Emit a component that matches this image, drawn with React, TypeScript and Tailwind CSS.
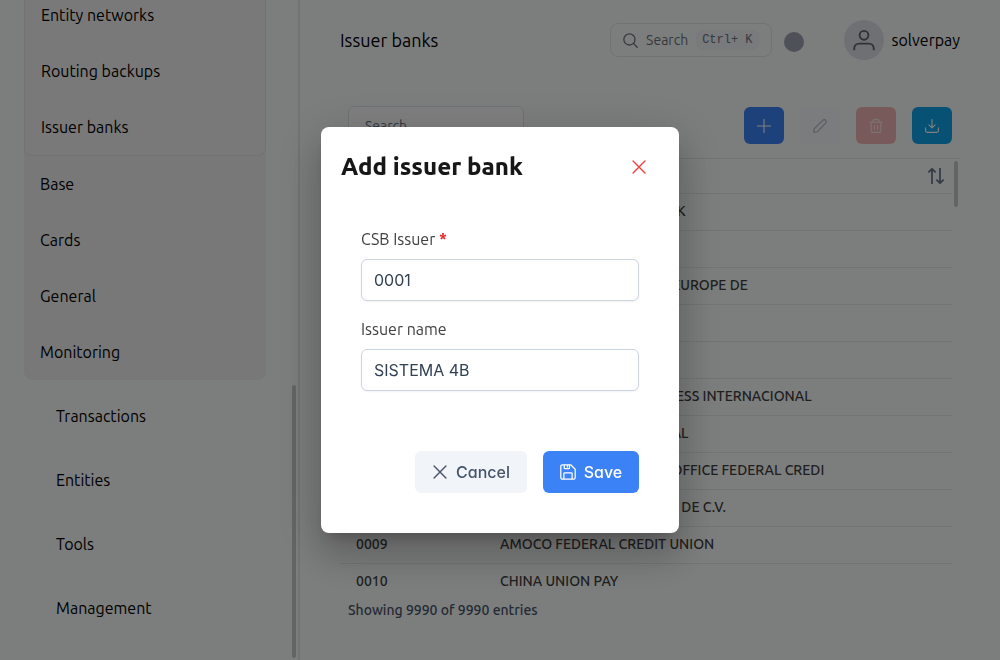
import type { ReactNode } from "react";

const openGroup = ["Entity networks", "Routing backups", "Issuer banks"];
const closedGroups = ["Base", "Cards", "General", "Monitoring"];
const sections = ["Transactions", "Entities", "Tools", "Management"];

const banks = [
  ["0000", "BANCO DE COMERCIO BANK"],
  ["0001", "SISTEMA 4B"],
  ["0002", "ALIBANK INTERNATIONAL EUROPE DE"],
  ["0003", "SERVIRED"],
  ["0004", "EURO 6000"],
  ["0005", "AMERICAN EXPRESS BUSINESS INTERNACIONAL"],
  ["0006", "MERCADOS INTERNACIONAL"],
  ["0007", "AMERICAN SAILORS POST OFFICE FEDERAL CREDI"],
  ["0008", "ROSA SOCIEDAD ANONIMA DE C.V."],
  ["0009", "AMOCO FEDERAL CREDIT UNION"],
  ["0010", "CHINA UNION PAY"],
];

function Icon({ children, className = "size-4", width = 1.1 }: { children: ReactNode; className?: string; width?: number }) {
  return (
    <svg
      viewBox="0 0 14 14"
      className={className}
      fill="none"
      stroke="currentColor"
      strokeWidth={width}
      strokeLinecap="round"
      strokeLinejoin="round"
      aria-hidden="true"
    >
      {children}
    </svg>
  );
}

const Times = () => (
  <Icon width={1.25}>
    <path d="M1.8 1.8 12.2 12.2M12.2 1.8 1.8 12.2" />
  </Icon>
);

function Sidebar() {
  return (
    <nav className="relative flex w-[300px] shrink-0 flex-col justify-end overflow-hidden border-r-2 border-[#e4e6e5] pr-8 pb-5 pl-6 text-base text-black">
      <div className="shrink-0 rounded-lg bg-[#f1f0f0]">
        <ul className="rounded-lg border border-t-0 border-[#e4e4e4] bg-[#f3f3f3]">
          {openGroup.map((t) => (
            <li key={t}>
              <a href="#" className="flex h-14 items-center px-4">{t}</a>
            </li>
          ))}
        </ul>
        <ul>
          {closedGroups.map((t) => (
            <li key={t}>
              <a href="#" className="flex h-14 items-center px-4">{t}</a>
            </li>
          ))}
        </ul>
      </div>
      <ul className="shrink-0 pt-1">
        {sections.map((t) => (
          <li key={t}>
            <a href="#" className="flex h-16 items-center px-8">{t}</a>
          </li>
        ))}
      </ul>
      <div className="absolute right-0.5 bottom-0.5 h-[273px] w-1 rounded-full bg-[#c8c9c8]" />
    </nav>
  );
}

function Header() {
  return (
    <header className="flex h-20 items-center px-10 text-black">
      <h1 className="text-lg">Issuer banks</h1>
      <button className="ml-auto flex h-[34px] items-center rounded-lg border border-[#e2e5e4] px-3 text-sm text-[#6b7280]">
        <Icon className="size-[15px]" width={1.2}>
          <circle cx="6" cy="6" r="5.2" />
          <path d="m9.8 9.8 3.5 3.5" />
        </Icon>
        <span className="ml-2">Search</span>
        <kbd className="ml-2 flex h-5 items-center rounded-md bg-[#f3f4f6] px-1.5 font-['Liberation_Mono',monospace] text-xs">Ctrl+ K</kbd>
      </button>
      <button aria-label="Theme" className="ml-3 mt-1 size-5 rounded-full bg-[#9ca3af]" />
      <button className="ml-10 flex items-center gap-2">
        <span className="flex size-10 items-center justify-center rounded-full bg-[#dfe1e6] text-[#5b6472]">
          <Icon className="size-[22px]" width={1.2}>
            <circle cx="7" cy="4" r="2.8" />
            <path d="M.8 13v-.6c0-1.9 1.4-3.1 3.2-3.1h6c1.8 0 3.2 1.2 3.2 3.1v.6" />
          </Icon>
        </span>
        solverpay
      </button>
    </header>
  );
}

function Toolbar() {
  return (
    <div className="flex items-center gap-4 px-2 pb-[13px]">
      <input
        aria-label="Search"
        placeholder="Search"
        className="mr-auto h-[39px] w-44 rounded-md border border-[#dde2ea] bg-white px-4 text-sm outline-none placeholder:text-[#64748b]"
      />
      <button aria-label="Add" className="flex h-[37px] w-10 items-center justify-center rounded-md bg-[#3b82f6] text-white">
        <Icon className="size-3.5"><path d="M7 .5v13M.5 7h13" /></Icon>
      </button>
      <button aria-label="Edit" className="flex h-[37px] w-10 items-center justify-center rounded-md bg-[#f6f8fa] text-[#b0b5be]">
        <Icon className="size-3.5">
          <path d="M.7 13.3 1.1 9.8 9.7 1.3a1.9 1.9 0 0 1 2.9 0 1.9 1.9 0 0 1 0 2.9L4.2 12.8Z" />
        </Icon>
      </button>
      <button aria-label="Delete" className="flex h-[37px] w-10 items-center justify-center rounded-md bg-[#f3b5b5] text-[#fbe4e4]">
        <Icon className="size-3.5">
          <path d="M.6 3.3h12.8M2.2 3.3v8.6c0 .8.6 1.5 1.4 1.5h6.8c.8 0 1.4-.7 1.4-1.5V3.3M4 3.3V1.8C4 1.1 4.5.6 5.1.6h3.8c.6 0 1.1.5 1.1 1.2v1.5M5.4 6.4v4M8.6 6.4v4" />
        </Icon>
      </button>
      <button aria-label="Export" className="flex h-[37px] w-10 items-center justify-center rounded-md bg-[#0ea5e9] text-white">
        <Icon className="size-3.5">
          <path d="M7 .6v8.2M3.9 5.9 7 8.9l3.1-3M.6 8.8v3c0 .9.7 1.6 1.6 1.6h9.6c.9 0 1.6-.7 1.6-1.6v-3" />
        </Icon>
      </button>
    </div>
  );
}

function BankTable() {
  return (
    <div className="relative border-t border-[#e2e4ec] pr-2">
      <table className="w-full table-fixed border-collapse text-left text-sm text-[#3f3f3f]">
        <thead>
          <tr className="h-[34px] border-b border-[#e6e8e8]">
            <th className="w-36 px-4 font-semibold">CSB</th>
            <th className="pr-2 pl-4 font-semibold">
              <span className="flex items-center justify-between">
                Name
                <button aria-label="Sort by name" className="text-[#64748b]">
                  <Icon className="size-4" width={1.5}>
                    <path d="M3.5 13.5V.9M.8 3.4 3.5.7l2.7 2.7M10.5.5v12.6M7.8 10.6l2.7 2.7 2.7-2.7" />
                  </Icon>
                </button>
              </span>
            </th>
          </tr>
        </thead>
        <tbody className="font-medium">
          {banks.map(([code, name]) => (
            <tr key={code} className="h-[37px] border-b border-[#e6e8e8] last:border-b-0">
              <td className="px-4 pb-0.5">{code}</td>
              <td className="px-4 pb-0.5">{name}</td>
            </tr>
          ))}
        </tbody>
      </table>
      <div className="absolute top-0.5 right-0.5 h-[46px] w-1 rounded-full bg-[#c8c9c8]" />
    </div>
  );
}

function Field({ id, label, value, required = false }: { id: string; label: string; value: string; required?: boolean }) {
  return (
    <div>
      <label htmlFor={id} className="block h-8 text-base text-[#404040]">
        {label}
        {required && <span className="font-bold text-[#dc2626]"> *</span>}
      </label>
      <input
        id={id}
        defaultValue={value}
        className="h-[42px] w-full rounded-md border border-[#cbd5e1] bg-white px-3 font-[Inter,sans-serif] text-base text-[#334155] shadow-[0_1px_2px_0_rgba(18,18,23,0.05)] outline-none"
      />
    </div>
  );
}

function IssuerDialog() {
  return (
    <div className="fixed inset-0 flex items-center justify-center bg-black/50">
      <div
        role="dialog"
        aria-modal="true"
        aria-labelledby="dialog-title"
        className="w-[358px] rounded-lg bg-white shadow-[0_11px_15px_-7px_rgba(0,0,0,0.2),0_24px_38px_3px_rgba(0,0,0,0.14),0_9px_46px_8px_rgba(0,0,0,0.12)]"
      >
        <div className="flex items-center justify-between p-5">
          <h2 id="dialog-title" className="text-2xl font-extrabold text-[#171717]">Add issuer bank</h2>
          <button aria-label="Close" className="flex size-10 items-center justify-center text-[#ef4444]">
            <Times />
          </button>
        </div>
        <form className="px-10 pt-5 pb-10">
          <div className="flex flex-col gap-4">
            <Field id="csb" label="CSB Issuer" value="0001" required />
            <Field id="name" label="Issuer name" value="SISTEMA 4B" />
          </div>
          <div className="mt-[60px] flex justify-end gap-4 font-[Inter,sans-serif] text-base font-medium [font-feature-settings:'cv11']">
            <button type="button" className="flex h-[42px] min-w-28 items-center justify-center gap-2 rounded-md bg-[#f1f5f9] px-4 text-[#475569]">
              <Times />
              Cancel
            </button>
            <button type="button" className="flex h-[42px] min-w-24 items-center justify-center gap-2 rounded-md bg-[#3b82f6] px-4 text-white">
              <Icon>
                <path d="M2.1.7h7.3l3.9 3.9v7.3c0 .8-.6 1.4-1.4 1.4H2.1c-.8 0-1.4-.6-1.4-1.4V2.1C.7 1.3 1.3.7 2.1.7ZM3.4 13.2V8.4c0-.4.3-.7.7-.7h5.8c.4 0 .7.3.7.7v4.8M3.7.8v2.8c0 .3.2.5.5.5h3.6c.3 0 .5-.2.5-.5V.8M6.5 1.6v1" />
              </Icon>
              Save
            </button>
          </div>
        </form>
      </div>
    </div>
  );
}

export default function App() {
  return (
    <div className="flex h-screen overflow-hidden bg-[#f9fcfa] font-[Ubuntu,'Noto_Sans',sans-serif]">
      <Sidebar />
      <div className="min-w-0 flex-1">
        <Header />
        <main className="px-10 pt-[26px]">
          <Toolbar />
          <BankTable />
          <p className="px-2 text-sm font-medium text-[#475569]">Showing 9990 of 9990 entries</p>
        </main>
      </div>
      <IssuerDialog />
    </div>
  );
}
